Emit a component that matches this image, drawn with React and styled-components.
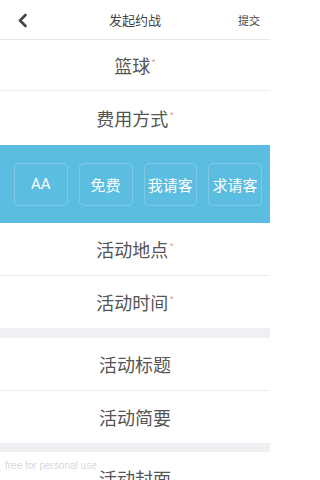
import React from 'react';
import styled, { createGlobalStyle } from 'styled-components';

const GlobalStyle = createGlobalStyle`
  html, body {
    margin: 0;
    padding: 0;
    background: #fff;
  }
  body {
    font-family: "Noto Sans CJK SC", "Noto Sans", "Liberation Sans", sans-serif;
  }
`;

const Page = styled.div`
  position: relative;
  width: 270px;
  height: 480px;
  overflow: hidden;
  background: #fff;
`;

const Header = styled.div`
  height: 40px;
  display: grid;
  grid-template-columns: 60px 1fr 60px;
  align-items: center;
  border-bottom: 1px solid #e8e8e8;
  box-sizing: border-box;
`;

const BackBtn = styled.div`
  display: flex;
  align-items: center;
  padding-left: 17px;
  padding-top: 1px;
`;

const Title = styled.div`
  text-align: center;
  font-size: 13px;
  color: #444;
`;

const Submit = styled.div`
  text-align: right;
  padding-right: 10px;
  font-size: 11px;
  color: #444;
`;

const Row = styled.div`
  height: ${(p) => p.h || 52}px;
  display: flex;
  align-items: center;
  justify-content: center;
  font-size: 18px;
  color: #555;
  border-bottom: ${(p) => (p.last ? 'none' : '1px solid #ececec')};
  box-sizing: border-box;
`;

const Label = styled.div`
  line-height: 1;
`;

const Star = styled.span`
  color: #e99a9a;
  font-size: 10px;
  position: relative;
  top: -6px;
  margin-left: 1px;
`;

const Band = styled.div`
  height: 78px;
  background: #5bbde0;
  display: flex;
  align-items: center;
  gap: 11px;
  padding: 0 8px 0 14px;
  box-sizing: border-box;
`;

const Choice = styled.div`
  width: 54px;
  height: 43px;
  box-sizing: border-box;
  border: 1px solid rgba(255, 255, 255, 0.22);
  border-radius: 5px;
  display: flex;
  align-items: center;
  justify-content: center;
  color: #fff;
  font-size: 15px;
  font-family: ${(p) => (p.latin ? '"Roboto", "Liberation Sans", sans-serif' : 'inherit')};
`;

const Gap = styled.div`
  height: ${(p) => p.h}px;
  background: #eff0f4;
`;

const Watermark = styled.div`
  position: absolute;
  left: 5px;
  top: 460px;
  font-family: "Liberation Sans", sans-serif;
  font-size: 10px;
  color: rgba(160, 160, 160, 0.45);
`;

const Field = ({ text, required, h, last }) => (
  <Row h={h} last={last}>
    <Label>
      {text}
      {required && <Star>*</Star>}
    </Label>
  </Row>
);

export default function App() {
  return (
    <Page>
      <GlobalStyle />
      <Header>
        <BackBtn>
          <svg width="11" height="15" viewBox="0 0 11 15">
            <path d="M8.5 2 L3 7.5 L8.5 13" fill="none" stroke="#444" strokeWidth="2.6" strokeLinecap="round" strokeLinejoin="round" />
          </svg>
        </BackBtn>
        <Title>发起约战</Title>
        <Submit>提交</Submit>
      </Header>
      <Field text="篮球" required h={51} />
      <Field text="费用方式" required h={54} last />
      <Band>
        <Choice latin>AA</Choice>
        <Choice>免费</Choice>
        <Choice>我请客</Choice>
        <Choice>求请客</Choice>
      </Band>
      <Field text="活动地点" required h={53} />
      <Field text="活动时间" required h={52} last />
      <Gap h={10} />
      <Field text="活动标题" h={53} />
      <Field text="活动简要" h={52} last />
      <Gap h={9} />
      <Field text="活动封面" h={52} last />
      <Watermark>free for personal use</Watermark>
    </Page>
  );
}
